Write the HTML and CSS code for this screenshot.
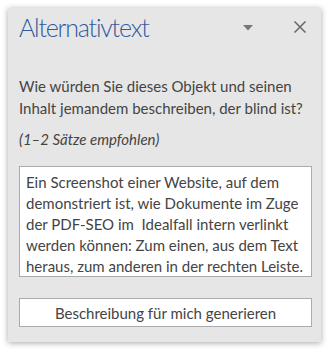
FILE: index.html
```html
<!DOCTYPE html>
<html lang="de">
<head>
<meta charset="utf-8">
<link rel="stylesheet" href="styles.css">
</head>
<body>
<div class="pane">
  <div class="header">
    <h1 class="title">Alternativtext</h1>
    <div class="tools">
      <svg class="caret" width="10" height="6" viewBox="0 0 10 6"><path d="M0 0H10L5 5.5Z" fill="#777"/></svg>
      <svg class="close" width="12" height="12" viewBox="0 0 12 12"><path d="M0.5 0.5L11.5 11.5M11.5 0.5L0.5 11.5" stroke="#666" stroke-width="1.5"/></svg>
    </div>
  </div>
  <p class="question">Wie würden Sie dieses Objekt und seinen Inhalt jemandem beschreiben, der blind ist?</p>
  <p class="hint">(1–2 Sätze empfohlen)</p>
  <div class="textbox">Ein Screenshot einer Website, auf dem demonstriert ist, wie Dokumente im Zuge der PDF-SEO im&nbsp; Idealfall intern verlinkt werden können: Zum einen, aus dem Text heraus, zum anderen in der rechten Leiste.</div>
  <button class="generate">Beschreibung für mich generieren</button>
</div>
</body>
</html>
```
FILE: styles.css
```css
html, body { margin: 0; padding: 0; background: #fff; }
body { padding: 8px; }
.pane {
  width: 313px;
  height: 334px;
  box-sizing: border-box;
  background: #e6e6e6;
  box-shadow: 0 1px 6px rgba(0,0,0,0.35);
  padding: 0 9px 0 11px;
  font-family: Lato, sans-serif;
  color: #444;
}
.header { display: flex; align-items: center; justify-content: space-between; height: 34px; padding-top: 2px; }
.title {
  margin: 0;
  font-family: Lato, sans-serif;
  font-weight: 300;
  font-size: 25px;
  letter-spacing: -1.2px;
  color: #2f5b9d;
}
.tools { display: flex; align-items: center; gap: 41px; padding-right: 6px; }
.caret { margin-top: 1px; }
.question { margin: 31px 0 0; font-size: 15px; line-height: 22px; }
.hint { margin: 9px 0 0; font-size: 15px; font-style: italic; line-height: 22px; }
.textbox {
  margin-top: 16px;
  background: #fff;
  border: 1px solid #ababab;
  padding: 5px 6px 0;
  font-size: 15px;
  line-height: 21px;
  height: 111px;
  box-sizing: border-box;
  overflow: hidden;
}
.generate {
  display: block;
  width: 100%;
  margin-top: 21px;
  height: 29px;
  background: #fff;
  border: 1px solid #ababab;
  font-family: Lato, sans-serif;
  font-size: 15px;
  color: #444;
}
```
